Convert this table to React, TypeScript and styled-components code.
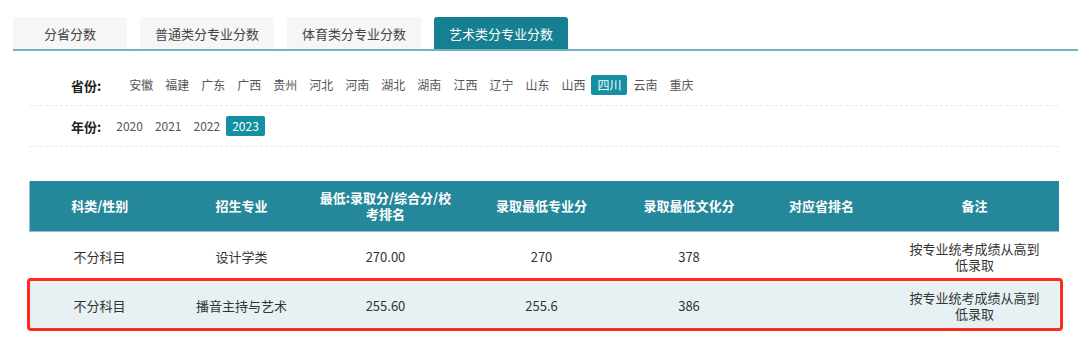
import styled, { createGlobalStyle, css } from 'styled-components';

const GlobalStyle = createGlobalStyle`
  body {
    margin: 0;
    background: #ffffff;
    font-family: "Noto Sans CJK SC", "Microsoft YaHei", sans-serif;
    color: #333333;
  }
`;

const tabs = ['分省分数', '普通类分专业分数', '体育类分专业分数', '艺术类分专业分数'];
const provinces = [
  '安徽', '福建', '广东', '广西', '贵州', '河北', '河南', '湖北',
  '湖南', '江西', '辽宁', '山东', '山西', '四川', '云南', '重庆',
];
const years = ['2020', '2021', '2022', '2023'];

const columns = [
  { title: '科类/性别', width: 140 },
  { title: '招生专业', width: 144 },
  { title: '最低:录取分/综合分/校考排名', width: 144 },
  { title: '录取最低专业分', width: 168 },
  { title: '录取最低文化分', width: 127 },
  { title: '对应省排名', width: 138 },
  { title: '备注', width: 168 },
];

const rows = [
  ['不分科目', '设计学类', '270.00', '270', '378', '', '按专业统考成绩从高到低录取'],
  ['不分科目', '播音主持与艺术', '255.60', '255.6', '386', '', '按专业统考成绩从高到低录取'],
];

/** 艺术类分专业分数 页面 */
const App: React.FC = (): JSX.Element => {
  return (
    <Page>
      <GlobalStyle />
      <TabBar>
        {tabs.map((tab, i) => (
          <Tab key={tab} $active={i === 3}>
            {tab}
          </Tab>
        ))}
      </TabBar>

      <Filters>
        <FilterRow>
          <FilterLabel $gap={22}>省份:</FilterLabel>
          {provinces.map((p) => (
            <FilterItem key={p} $active={p === '四川'}>
              {p}
            </FilterItem>
          ))}
        </FilterRow>
        <FilterRow>
          <FilterLabel $gap={9}>年份:</FilterLabel>
          {years.map((y) => (
            <FilterItem key={y} $active={y === '2023'}>
              {y}
            </FilterItem>
          ))}
        </FilterRow>
      </Filters>

      <TableWrap>
        <ScoreTable>
          <colgroup>
            {columns.map((c) => (
              <col key={c.title} style={{ width: c.width }} />
            ))}
          </colgroup>
          <thead>
            <tr>
              {columns.map((c) => (
                <HeadCell key={c.title}>{c.title}</HeadCell>
              ))}
            </tr>
          </thead>
          <tbody>
            {rows.map((row, i) => (
              <BodyRow key={i} $striped={i % 2 === 1}>
                {row.map((cell, j) => (
                  <BodyCell key={j} $wide={j === 6}>
                    {cell}
                  </BodyCell>
                ))}
              </BodyRow>
            ))}
          </tbody>
        </ScoreTable>
        {/* 标注框 */}
        <Highlight />
      </TableWrap>
    </Page>
  );
};

export default App;

const Page = styled.div`
  width: 1080px;
  height: 358px;
  padding-top: 17px;
  box-sizing: border-box;
  overflow: hidden;
`;

const TabBar = styled.div`
  display: flex;
  gap: 13px;
  margin-left: 13px;
  width: 1065px;
  border-bottom: 2px solid #6cb4c6;
`;

const Tab = styled.div<{ $active?: boolean }>`
  min-width: 114px;
  height: 32px;
  padding: 0 15px;
  box-sizing: border-box;
  display: flex;
  align-items: center;
  justify-content: center;
  font-size: 13px;
  color: #444444;
  background: #f6f6f6;
  border-radius: 3px 3px 0 0;
  ${({ $active }) =>
    $active &&
    css`
      background: #177f92;
      color: #ffffff;
    `}
`;

const Filters = styled.div`
  margin: 14px 0 0 30px;
  width: 1028px;
`;

const FilterRow = styled.div`
  display: flex;
  align-items: center;
  padding: 10px 0 10px 41px;
  border-bottom: 1px dashed #e8e8e8;
`;

const FilterLabel = styled.span<{ $gap: number }>`
  font-size: 13px;
  font-weight: 700;
  color: #222222;
  margin-right: ${({ $gap }) => $gap}px;
`;

const FilterItem = styled.span<{ $active?: boolean }>`
  height: 20px;
  line-height: 20px;
  padding: 0 6px;
  font-size: 12px;
  color: #555555;
  border-radius: 2px;
  ${({ $active }) =>
    $active &&
    css`
      background: #1490a2;
      color: #ffffff;
    `}
`;

const TableWrap = styled.div`
  position: relative;
  margin: 34px 0 0 29px;
  width: 1029px;
`;

const ScoreTable = styled.table`
  width: 100%;
  border-collapse: collapse;
  table-layout: fixed;
  font-size: 13px;
`;

const HeadCell = styled.th`
  height: 50px;
  padding: 0 1px;
  background: #24879a;
  color: #ffffff;
  font-weight: 700;
  line-height: 16px;
  text-align: center;
  border-bottom: 1px solid #8fc1cc;
  &:first-child {
    border-left: 1px solid #8fc1cc;
  }
`;

const BodyRow = styled.tr<{ $striped?: boolean }>`
  background: ${({ $striped }) => ($striped ? '#e7f1f4' : '#ffffff')};
`;

const BodyCell = styled.td<{ $wide?: boolean }>`
  height: 49px;
  padding: 0 ${({ $wide }) => ($wide ? 16 : 4)}px;
  text-align: center;
  color: #333333;
  line-height: 16px;
`;

const Highlight = styled.div`
  position: absolute;
  top: 97px;
  left: -2px;
  right: -5px;
  height: 53px;
  box-sizing: border-box;
  border: 3px solid #ff2a1e;
  border-radius: 4px;
  pointer-events: none;
`;
